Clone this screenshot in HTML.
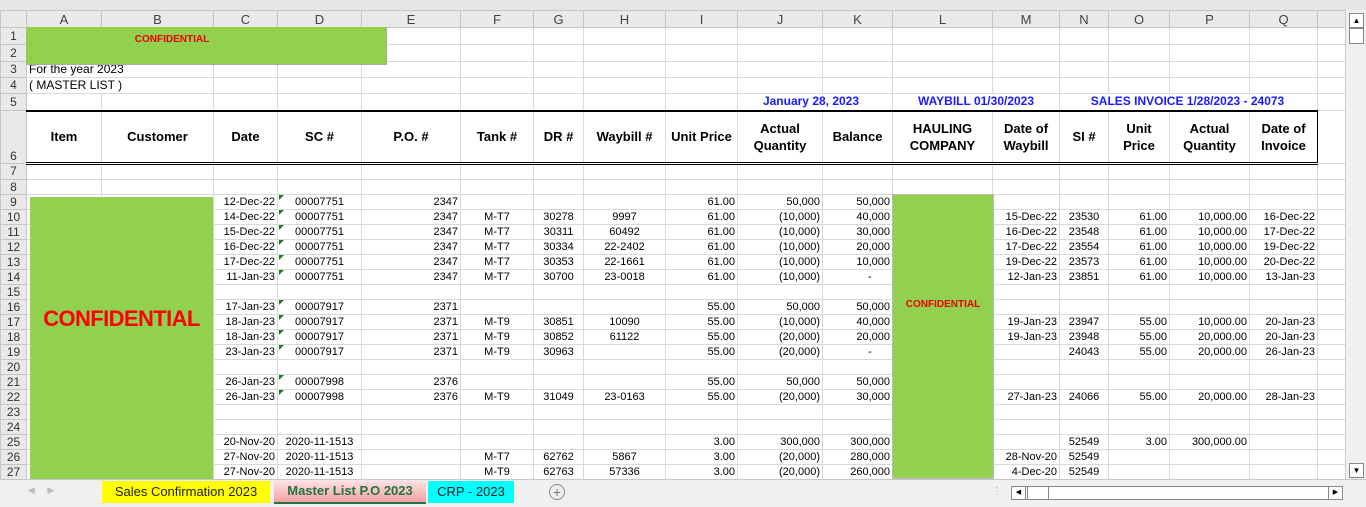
<!DOCTYPE html>
<html><head><meta charset="utf-8">
<style>
*{box-sizing:border-box;margin:0;padding:0}
body{width:1366px;height:507px;overflow:hidden;background:#fff;font-family:"Liberation Sans",Arial,sans-serif;position:relative}
#top{position:absolute;left:0;top:0;width:1366px;height:10px;background:#e6e6e6}
table{position:absolute;left:0;top:10px;border-collapse:collapse;table-layout:fixed;width:1345px}
td,th{border:1px solid #d9d9d9;font-size:11px;white-space:nowrap;overflow:hidden;padding:0 2px;color:#000;font-weight:normal;line-height:13px}
th{background:#e9e9e9;border-color:#c6c6c6;color:#333;font-size:12px;text-align:center;padding:0}
tr.h th{font-size:13px;color:#444}
.r{text-align:right}.c{text-align:center}
tr.d{height:15px}
.t{position:relative}
.t::before{content:"";position:absolute;left:1px;top:0;border-top:5px solid #1e7a1e;border-right:5px solid transparent}
tr.hd td{font-weight:bold;font-size:13px;text-align:center;white-space:normal;line-height:17px;border-top:2px solid #000;border-bottom:3px double #000}
.blue{color:#1a1aff;font-weight:bold;font-size:12px}
#g1{position:absolute;left:26px;top:27px;width:361px;height:38px;background:#92d050;border-right:1px solid #aaa;border-bottom:1px solid #aaa}
#g1 span{position:absolute;left:0;width:292px;top:7px;text-align:center;color:#e00;font-weight:bold;font-size:10px}
#g2{position:absolute;left:30px;top:197px;width:183px;height:282px;background:#92d050}
#g2 span{position:absolute;left:0;right:0;top:109px;text-align:center;color:#f00;font-weight:bold;font-size:22px;letter-spacing:-0.6px}
#g3{position:absolute;left:892px;top:194px;width:102px;height:285px;background:#92d050;border:1px solid #bbb}
#g3 span{position:absolute;left:0;right:0;top:104px;text-align:center;color:#e00;font-weight:bold;font-size:10px}
#vs{position:absolute;left:1345px;top:10px;width:21px;height:469px;background:#f0f0f0;border-left:1px solid #ccc}
.sb{position:absolute;background:#fff;border:1px solid #888;width:15px}
#tabs{position:absolute;left:0;top:479px;width:1366px;height:28px;background:#f0f0f0;border-top:1px solid #c6c6c6}
.tab{position:absolute;top:1px;height:22px;font-size:13px;line-height:22px;text-align:center}
</style></head><body>
<div id="top"></div>
<table>
<colgroup><col style="width:26px"><col style="width:75px"><col style="width:112px"><col style="width:64px"><col style="width:84px"><col style="width:99px"><col style="width:73px"><col style="width:50px"><col style="width:82px"><col style="width:72px"><col style="width:85px"><col style="width:70px"><col style="width:100px"><col style="width:67px"><col style="width:49px"><col style="width:61px"><col style="width:80px"><col style="width:68px"><col style="width:28px"></colgroup>
<tr class="h" style="height:17px"><th style="background:#e9e9e9"></th><th>A</th><th>B</th><th>C</th><th>D</th><th>E</th><th>F</th><th>G</th><th>H</th><th>I</th><th>J</th><th>K</th><th>L</th><th>M</th><th>N</th><th>O</th><th>P</th><th>Q</th><th></th></tr>
<tr style="height:17px"><th>1</th><td></td><td></td><td></td><td></td><td></td><td></td><td></td><td></td><td></td><td></td><td></td><td></td><td></td><td></td><td></td><td></td><td></td><td></td></tr>
<tr style="height:17px"><th>2</th><td></td><td></td><td></td><td></td><td></td><td></td><td></td><td></td><td></td><td></td><td></td><td></td><td></td><td></td><td></td><td></td><td></td><td></td></tr>
<tr style="height:16px"><th>3</th><td colspan="2" style="font-size:12px">For the year 2023</td><td></td><td></td><td></td><td></td><td></td><td></td><td></td><td></td><td></td><td></td><td></td><td></td><td></td><td></td><td></td><td></td></tr>
<tr style="height:16px"><th>4</th><td colspan="2" style="font-size:12px">( MASTER LIST )</td><td></td><td></td><td></td><td></td><td></td><td></td><td></td><td></td><td></td><td></td><td></td><td></td><td></td><td></td><td></td><td></td></tr>
<tr style="height:17px"><th>5</th><td></td><td></td><td></td><td></td><td></td><td></td><td></td><td></td><td></td><td colspan="2" class="c blue" style="padding-right:10px">January 28, 2023</td><td colspan="2" class="c blue" style="padding-left:0;padding-right:0">WAYBILL 01/30/2023</td><td colspan="4" class="c blue" style="padding-right:4px">SALES INVOICE 1/28/2023 - 24073</td><td></td></tr>
<tr class="hd" style="height:53px"><th style="vertical-align:bottom;border-top:1px solid #c6c6c6;border-bottom:1px solid #c6c6c6">6</th><td>Item</td><td>Customer</td><td>Date</td><td>SC #</td><td>P.O. #</td><td>Tank #</td><td>DR #</td><td>Waybill #</td><td>Unit Price</td><td>Actual Quantity</td><td>Balance</td><td>HAULING COMPANY</td><td>Date of Waybill</td><td>SI #</td><td>Unit Price</td><td>Actual Quantity</td><td style="border-left:1px solid #000;border-right:1px solid #000">Date of Invoice</td><td style="border-top:1px solid #d9d9d9;border-bottom:1px solid #d9d9d9"></td></tr>
<tr class="d" style="height:16px"><th>7</th><td></td><td></td><td></td><td></td><td></td><td></td><td></td><td></td><td></td><td></td><td></td><td></td><td></td><td></td><td></td><td></td><td></td><td></td></tr>
<tr class="d"><th>8</th><td></td><td></td><td></td><td></td><td></td><td></td><td></td><td></td><td></td><td></td><td></td><td></td><td></td><td></td><td></td><td></td><td></td><td></td></tr>
<tr class="d"><th>9</th><td></td><td></td><td class="r">12-Dec-22</td><td class="c t">00007751</td><td class="r">2347</td><td></td><td></td><td></td><td class="r">61.00</td><td class="r">50,000</td><td class="r">50,000</td><td></td><td></td><td></td><td></td><td></td><td></td><td></td></tr>
<tr class="d"><th>10</th><td></td><td></td><td class="r">14-Dec-22</td><td class="c t">00007751</td><td class="r">2347</td><td class="c">M-T7</td><td class="c">30278</td><td class="c">9997</td><td class="r">61.00</td><td class="r">(10,000)</td><td class="r">40,000</td><td></td><td class="r">15-Dec-22</td><td class="c">23530</td><td class="r">61.00</td><td class="r">10,000.00</td><td class="r">16-Dec-22</td><td></td></tr>
<tr class="d"><th>11</th><td></td><td></td><td class="r">15-Dec-22</td><td class="c t">00007751</td><td class="r">2347</td><td class="c">M-T7</td><td class="c">30311</td><td class="c">60492</td><td class="r">61.00</td><td class="r">(10,000)</td><td class="r">30,000</td><td></td><td class="r">16-Dec-22</td><td class="c">23548</td><td class="r">61.00</td><td class="r">10,000.00</td><td class="r">17-Dec-22</td><td></td></tr>
<tr class="d"><th>12</th><td></td><td></td><td class="r">16-Dec-22</td><td class="c t">00007751</td><td class="r">2347</td><td class="c">M-T7</td><td class="c">30334</td><td class="c">22-2402</td><td class="r">61.00</td><td class="r">(10,000)</td><td class="r">20,000</td><td></td><td class="r">17-Dec-22</td><td class="c">23554</td><td class="r">61.00</td><td class="r">10,000.00</td><td class="r">19-Dec-22</td><td></td></tr>
<tr class="d"><th>13</th><td></td><td></td><td class="r">17-Dec-22</td><td class="c t">00007751</td><td class="r">2347</td><td class="c">M-T7</td><td class="c">30353</td><td class="c">22-1661</td><td class="r">61.00</td><td class="r">(10,000)</td><td class="r">10,000</td><td></td><td class="r">19-Dec-22</td><td class="c">23573</td><td class="r">61.00</td><td class="r">10,000.00</td><td class="r">20-Dec-22</td><td></td></tr>
<tr class="d"><th>14</th><td></td><td></td><td class="r">11-Jan-23</td><td class="c t">00007751</td><td class="r">2347</td><td class="c">M-T7</td><td class="c">30700</td><td class="c">23-0018</td><td class="r">61.00</td><td class="r">(10,000)</td><td class="r">-&nbsp;&nbsp;&nbsp;&nbsp;&nbsp;&nbsp;</td><td></td><td class="r">12-Jan-23</td><td class="c">23851</td><td class="r">61.00</td><td class="r">10,000.00</td><td class="r">13-Jan-23</td><td></td></tr>
<tr class="d"><th>15</th><td></td><td></td><td></td><td></td><td></td><td></td><td></td><td></td><td></td><td></td><td></td><td></td><td></td><td></td><td></td><td></td><td></td><td></td></tr>
<tr class="d"><th>16</th><td></td><td></td><td class="r">17-Jan-23</td><td class="c t">00007917</td><td class="r">2371</td><td></td><td></td><td></td><td class="r">55.00</td><td class="r">50,000</td><td class="r">50,000</td><td></td><td></td><td></td><td></td><td></td><td></td><td></td></tr>
<tr class="d"><th>17</th><td></td><td></td><td class="r">18-Jan-23</td><td class="c t">00007917</td><td class="r">2371</td><td class="c">M-T9</td><td class="c">30851</td><td class="c">10090</td><td class="r">55.00</td><td class="r">(10,000)</td><td class="r">40,000</td><td></td><td class="r">19-Jan-23</td><td class="c">23947</td><td class="r">55.00</td><td class="r">10,000.00</td><td class="r">20-Jan-23</td><td></td></tr>
<tr class="d"><th>18</th><td></td><td></td><td class="r">18-Jan-23</td><td class="c t">00007917</td><td class="r">2371</td><td class="c">M-T9</td><td class="c">30852</td><td class="c">61122</td><td class="r">55.00</td><td class="r">(20,000)</td><td class="r">20,000</td><td></td><td class="r">19-Jan-23</td><td class="c">23948</td><td class="r">55.00</td><td class="r">20,000.00</td><td class="r">20-Jan-23</td><td></td></tr>
<tr class="d"><th>19</th><td></td><td></td><td class="r">23-Jan-23</td><td class="c t">00007917</td><td class="r">2371</td><td class="c">M-T9</td><td class="c">30963</td><td></td><td class="r">55.00</td><td class="r">(20,000)</td><td class="r">-&nbsp;&nbsp;&nbsp;&nbsp;&nbsp;&nbsp;</td><td></td><td></td><td class="c">24043</td><td class="r">55.00</td><td class="r">20,000.00</td><td class="r">26-Jan-23</td><td></td></tr>
<tr class="d"><th>20</th><td></td><td></td><td></td><td></td><td></td><td></td><td></td><td></td><td></td><td></td><td></td><td></td><td></td><td></td><td></td><td></td><td></td><td></td></tr>
<tr class="d"><th>21</th><td></td><td></td><td class="r">26-Jan-23</td><td class="c t">00007998</td><td class="r">2376</td><td></td><td></td><td></td><td class="r">55.00</td><td class="r">50,000</td><td class="r">50,000</td><td></td><td></td><td></td><td></td><td></td><td></td><td></td></tr>
<tr class="d"><th>22</th><td></td><td></td><td class="r">26-Jan-23</td><td class="c t">00007998</td><td class="r">2376</td><td class="c">M-T9</td><td class="c">31049</td><td class="c">23-0163</td><td class="r">55.00</td><td class="r">(20,000)</td><td class="r">30,000</td><td></td><td class="r">27-Jan-23</td><td class="c">24066</td><td class="r">55.00</td><td class="r">20,000.00</td><td class="r">28-Jan-23</td><td></td></tr>
<tr class="d"><th>23</th><td></td><td></td><td></td><td></td><td></td><td></td><td></td><td></td><td></td><td></td><td></td><td></td><td></td><td></td><td></td><td></td><td></td><td></td></tr>
<tr class="d"><th>24</th><td></td><td></td><td></td><td></td><td></td><td></td><td></td><td></td><td></td><td></td><td></td><td></td><td></td><td></td><td></td><td></td><td></td><td></td></tr>
<tr class="d"><th>25</th><td></td><td></td><td class="r">20-Nov-20</td><td class="c">2020-11-1513</td><td></td><td></td><td></td><td></td><td class="r">3.00</td><td class="r">300,000</td><td class="r">300,000</td><td></td><td></td><td class="c">52549</td><td class="r">3.00</td><td class="r">300,000.00</td><td></td><td></td></tr>
<tr class="d"><th>26</th><td></td><td></td><td class="r">27-Nov-20</td><td class="c">2020-11-1513</td><td></td><td class="c">M-T7</td><td class="c">62762</td><td class="c">5867</td><td class="r">3.00</td><td class="r">(20,000)</td><td class="r">280,000</td><td></td><td class="r">28-Nov-20</td><td class="c">52549</td><td></td><td></td><td></td><td></td></tr>
<tr class="d"><th>27</th><td></td><td></td><td class="r">27-Nov-20</td><td class="c">2020-11-1513</td><td></td><td class="c">M-T9</td><td class="c">62763</td><td class="c">57336</td><td class="r">3.00</td><td class="r">(20,000)</td><td class="r">260,000</td><td></td><td class="r">4-Dec-20</td><td class="c">52549</td><td></td><td></td><td></td><td></td></tr>
</table>
<div id="g1"><span>CONFIDENTIAL</span></div>
<div id="g2"><span>CONFIDENTIAL</span></div>
<div id="g3"><span>CONFIDENTIAL</span></div>
<div id="vs">
 <div class="sb" style="left:3px;top:3px;height:15px;font-size:8px;text-align:center;line-height:13px">▲</div>
 <div class="sb" style="left:3px;top:18px;height:16px"></div>
 <div class="sb" style="left:3px;top:453px;height:15px;font-size:8px;text-align:center;line-height:13px">▼</div>
</div>
<div id="tabs">
 <div style="position:absolute;left:28px;top:5px;font-size:9px;color:#bbb">◀&nbsp;&nbsp;&nbsp;&nbsp;&nbsp;▶</div>
 <div class="tab" style="left:102px;width:168px;background:#ffff00;color:#222">Sales Confirmation 2023</div>
 <div class="tab" style="left:274px;width:152px;top:0;height:24px;background:linear-gradient(#fde4e4,#f4a0a0);color:#217346;font-weight:bold;border-bottom:2px solid #217346">Master List P.O 2023</div>
 <div class="tab" style="left:428px;width:86px;background:#00ffff;color:#222">CRP - 2023</div>
 <div style="position:absolute;left:549px;top:4px;width:16px;height:16px;border:1px solid #888;border-radius:50%;text-align:center;line-height:14px;font-size:14px;color:#777">+</div>
 <div style="position:absolute;left:992px;top:6px;color:#aaa;font-size:10px">⋮</div>
 <div style="position:absolute;left:1011px;top:6px;width:332px;height:14px;background:#fff;border:1px solid #888">
  <div style="position:absolute;left:0;top:0;width:14px;height:12px;font-size:7px;line-height:12px;text-align:center;border-right:1px solid #888">◀</div>
  <div style="position:absolute;left:15px;top:-1px;width:22px;height:14px;border:1px solid #888"></div>
  <div style="position:absolute;right:0;top:0;width:14px;height:12px;font-size:7px;line-height:12px;text-align:center;border-left:1px solid #888">▶</div>
 </div>
</div>
</body></html>
